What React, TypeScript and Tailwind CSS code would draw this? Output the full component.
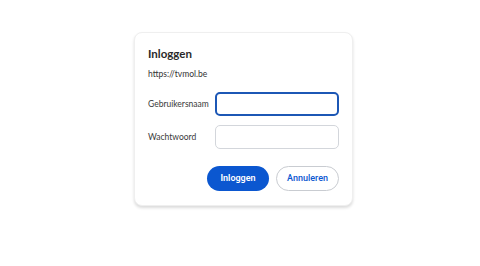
import React from "react";

export default function App() {
  return (
    <div className="w-[480px] h-[266px] bg-white" style={{ fontFamily: 'Lato, "Noto Sans", sans-serif' }}>
      <div className="pt-[32px] pl-[134px]">
        <div className="w-[219px] h-[174px] rounded-[8px] bg-white border border-[#efefef] shadow-[0_2px_3px_rgba(0,0,0,0.14)] px-[13px] pt-[13px] flex flex-col">
          <div className="text-[11.5px] leading-[16px] font-bold text-[#2a2a2a]">Inloggen</div>
          <div className="mt-[6px] text-[8.5px] leading-[12px] text-[#333]">https://tvmol.be</div>
          <div className="mt-[12px] flex items-center">
            <div className="w-[67px] pt-[1px] text-[8.5px] text-[#3a3a3a]">Gebruikersnaam</div>
            <div className="w-[124px] h-[24px] rounded-[5px] border-2 border-[#1c57b5] bg-white"></div>
          </div>
          <div className="mt-[9px] flex items-center">
            <div className="w-[67px] pt-[1px] text-[8.5px] text-[#3a3a3a]">Wachtwoord</div>
            <div className="w-[124px] h-[24px] rounded-[5px] border border-[#d3d6db] bg-white"></div>
          </div>
          <div className="mt-[17px] flex justify-end gap-[7px]">
            <div className="w-[62px] h-[25px] rounded-full bg-[#0b57d0] text-white text-[9px] font-semibold flex items-center justify-center" style={{ fontFamily: 'Roboto, sans-serif' }}>Inloggen</div>
            <div className="w-[63px] h-[25px] rounded-full border border-[#c9ccd1] bg-white text-[#0b57d0] text-[9px] font-medium flex items-center justify-center" style={{ fontFamily: 'Roboto, sans-serif' }}>Annuleren</div>
          </div>
        </div>
      </div>
    </div>
  );
}
